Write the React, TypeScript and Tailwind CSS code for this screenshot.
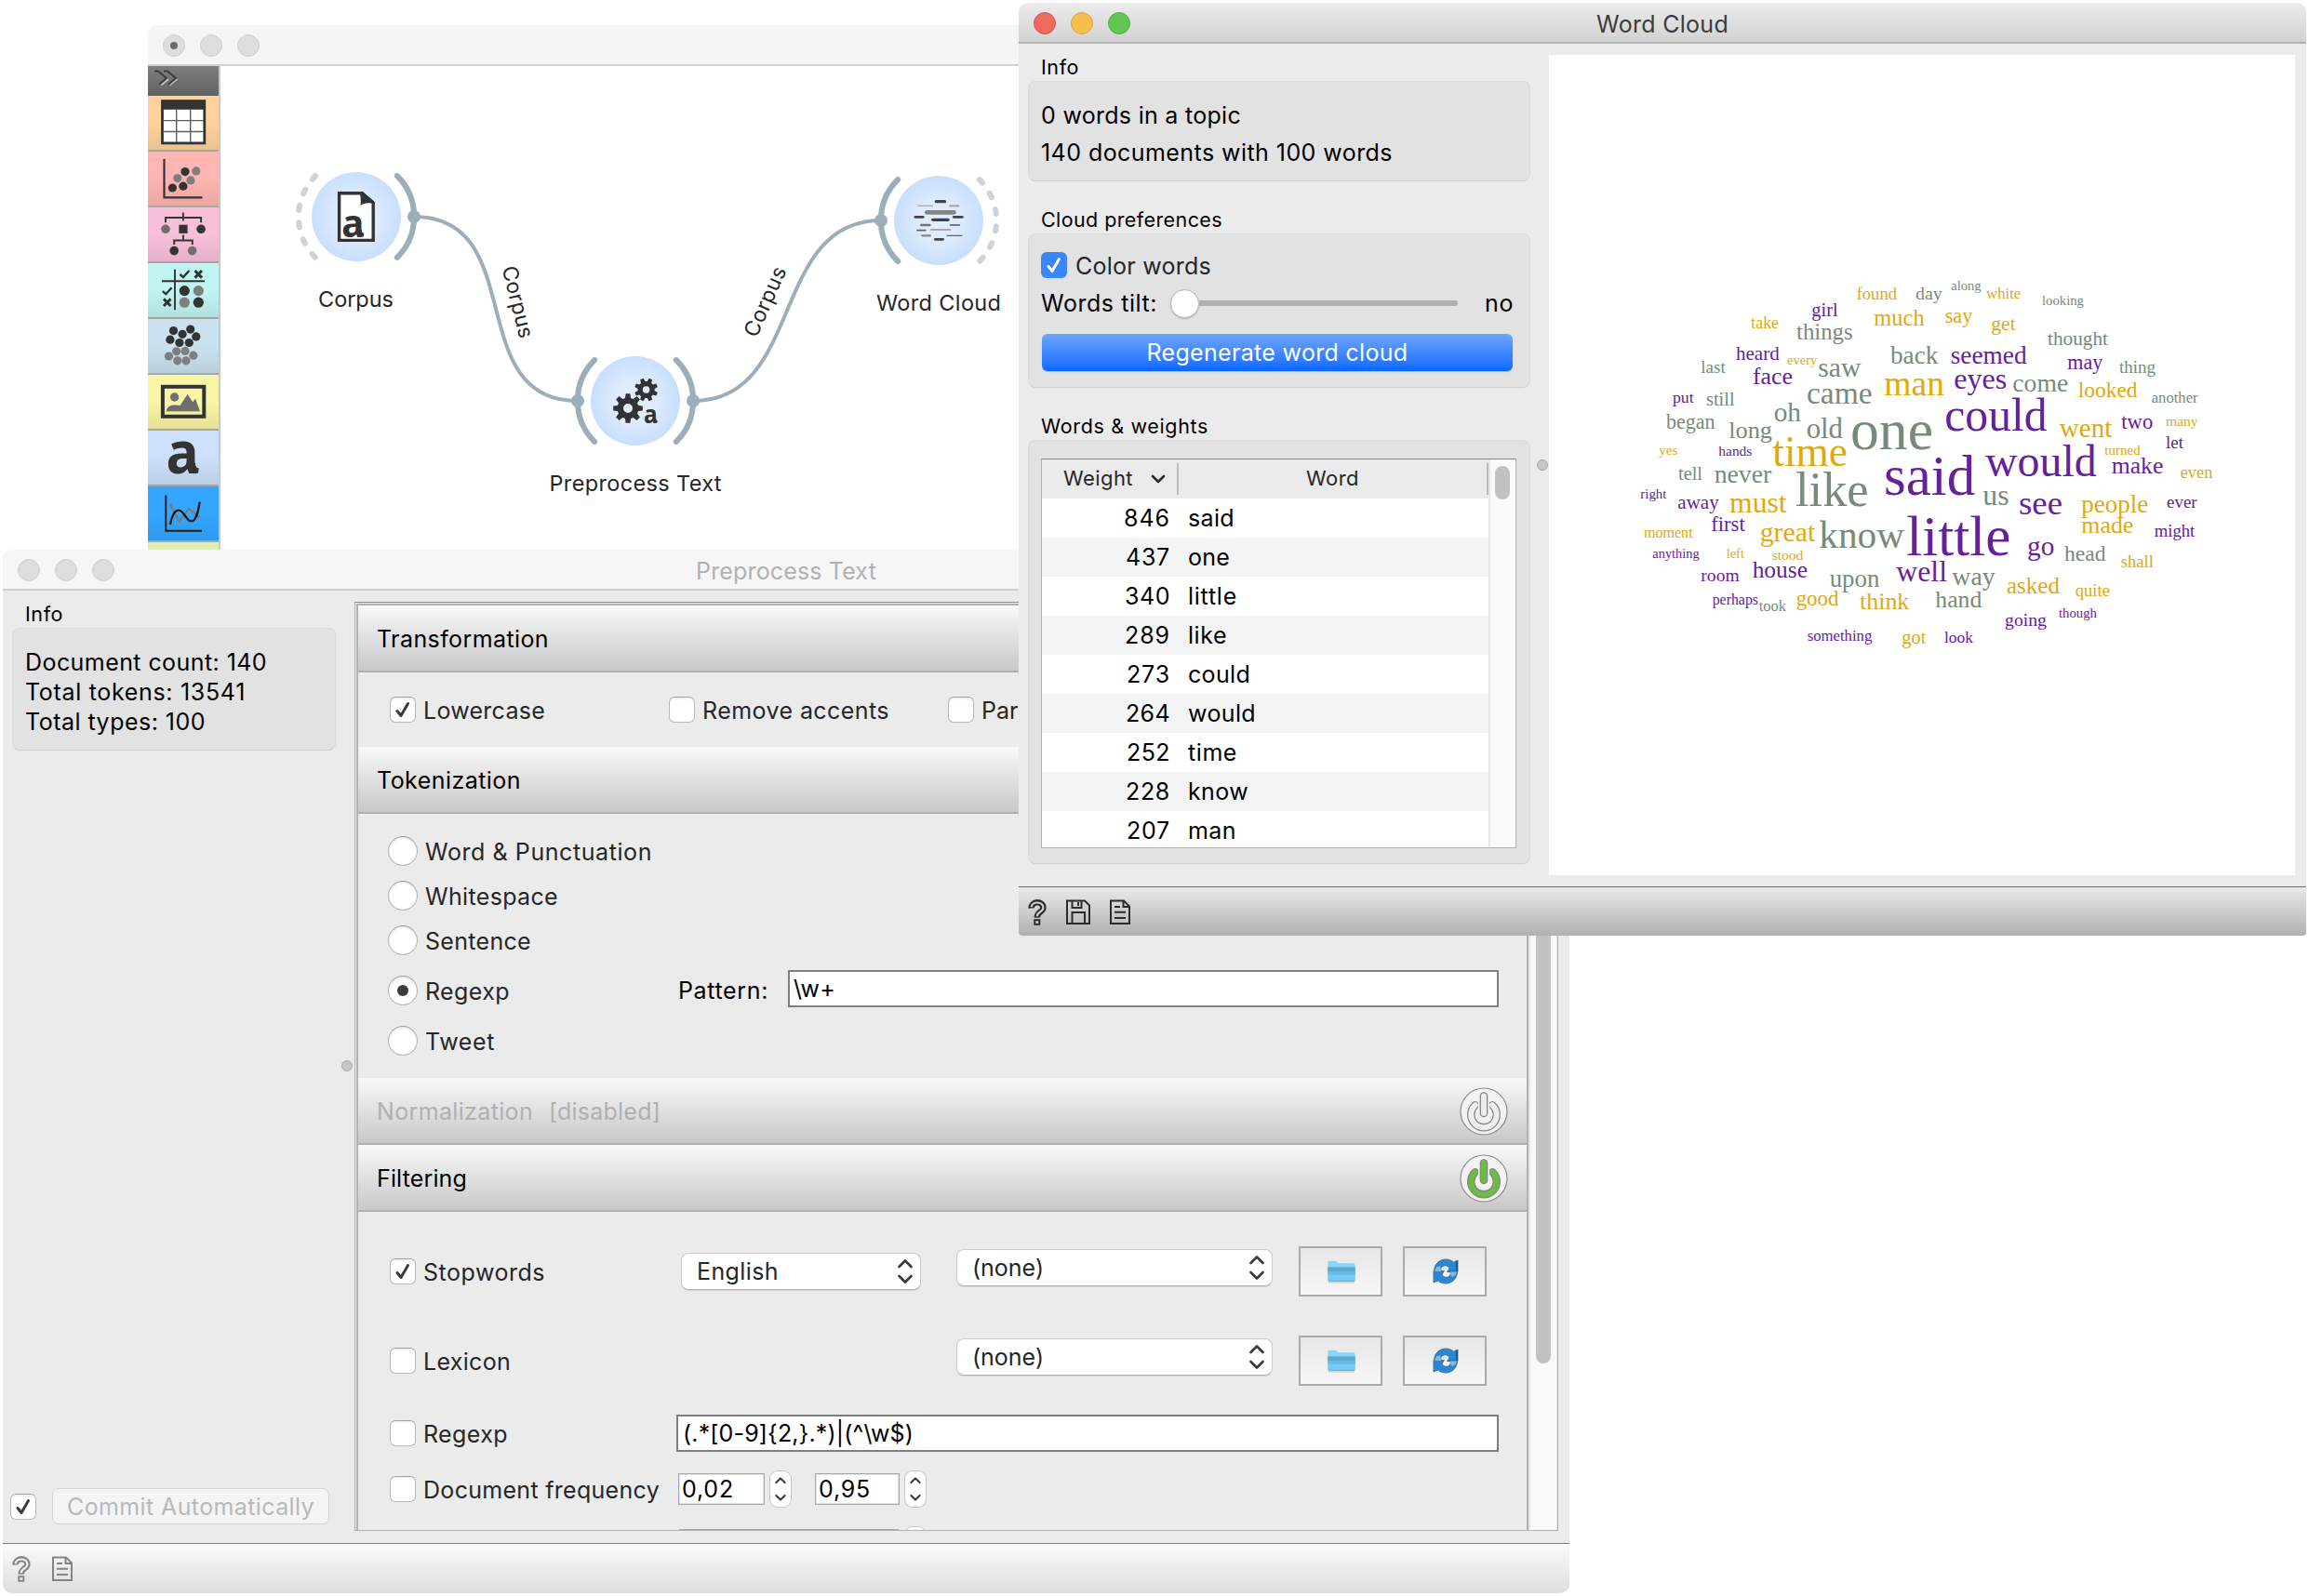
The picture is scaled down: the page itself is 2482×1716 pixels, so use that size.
import React from "react";

const measureCtx = document.createElement("canvas").getContext("2d")!;
const measure = (text: string, font: string) => {
  measureCtx.font = font;
  return measureCtx.measureText(text).width;
};

/** A single line of interface text, tracked to fill the width w. */
function T({ children, w, s = 25, className = "" }: { children: string; w?: number; s?: number; className?: string }) {
  const natural = measure(children, `400 ${s}px Inter`);
  const spacing = w ? (w + 2 - natural) / children.length : 0;
  return (
    <span className={`block shrink-0 whitespace-pre ${className}`} style={{ fontSize: s, letterSpacing: spacing }}>
      {children}
    </span>
  );
}

/* ---------- icons ---------- */

function HelpIcon({ light, dark }: { light: string; dark: string }) {
  const d = "M3.6 9.6C3 1.6 16.4 1 16.4 9C16.4 13.4 9.6 13.6 9.8 19.6";
  return (
    <svg width="20" height="28" viewBox="0 0 20 28" fill="none">
      <path d={d} stroke={dark} strokeWidth="6.4" />
      <path d="M3.6 8.2C4.2 2 16.4 1.6 16.4 9C16.4 13.4 9.6 13.6 9.8 18.2" stroke={light} strokeWidth="2.2" />
      <rect x="7.3" y="22.2" width="5" height="4.6" stroke={dark} strokeWidth="2" fill={light} />
    </svg>
  );
}

function SaveIcon({ dark }: { dark: string }) {
  return (
    <svg width="26" height="28" viewBox="0 0 26 28" fill="none" stroke={dark} strokeWidth="2">
      <path d="M1 1.5H20L25 6.5V26H1Z" />
      <path d="M6.5 1.5V9H16.5V1.5M13 3V7" />
      <path d="M6.5 26V14H20V26" />
    </svg>
  );
}

function ReportIcon({ dark }: { dark: string }) {
  return (
    <svg width="22" height="28" viewBox="0 0 22 28" fill="none" stroke={dark} strokeWidth="2">
      <path d="M1 1.5H15L21 7.5V26H1Z" />
      <path d="M14.5 1.5V8H21M5 8H11M5 13.8H17M5 20H17" />
    </svg>
  );
}

function Tick({ className }: { className: string }) {
  return (
    <svg width="20" height="20" viewBox="0 0 20 20" fill="none" strokeWidth="3" strokeLinecap="round" strokeLinejoin="round" className={className}>
      <path d="M4 11.5L8 16.5L15.5 3.5" />
    </svg>
  );
}

function Chevrons({ small }: { small?: boolean }) {
  return (
    <svg width={small ? 12 : 18} height={26} viewBox="0 0 18 26" preserveAspectRatio="none" fill="none" stroke="#3a3a3a" strokeWidth="2.6" strokeLinecap="round" strokeLinejoin="round">
      <path d={small ? "M2 6L9 1.5L16 6M2 20L9 24.5L16 20" : "M2.5 8L9 1.5L15.5 8M2.5 18L9 24.5L15.5 18"} />
    </svg>
  );
}

function PowerIcon({ on }: { on?: boolean }) {
  const fill = on ? "#6cbb45" : "#ededed";
  const arc = "M16.8 19.2A13.8 13.8 0 1 0 35.2 19.2";
  return (
    <svg width="52" height="52" viewBox="0 0 52 52" fill="none" strokeLinecap="round">
      <circle cx="26" cy="26" r="25" fill="#f2f2f2" stroke="#8c8c8c" strokeWidth="1.2" />
      <path d={arc} stroke="#868686" strokeWidth="8.4" />
      <path d={arc} stroke={fill} strokeWidth="6" />
      <path d="M26 9.5V28" stroke="#f2f2f2" strokeWidth="12" />
      <path d="M26 9.5V28" stroke="#868686" strokeWidth="8.6" />
      <path d="M26 9.5V28" stroke={fill} strokeWidth="6" />
    </svg>
  );
}

function FolderIcon() {
  return (
    <svg width="30" height="25" viewBox="0 0 30 25" className="translate-x-px">
      <path d="M0.5 2.5Q0.5 0.800 2 0.800H9L11.500 3.200H28Q29.5 3.2 29.5 5V10H0.5Z" fill="#8ad4f8" />
      <path d="M0.2 7.5H29.8V21Q29.8 22.5 28.300 22.5H1.700Q0.2 22.5 0.2 21Z" fill="#78cbf5" />
      <path d="M0.2 7.5H29.8V12H0.2Z" fill="#5babd6" />
      <path d="M0.2 12H29.8V15.500H0.2Z" fill="#69bbe5" />
      <path d="M1 22.200H29" stroke="#5aaad8" strokeWidth="1" />
      <path d="M1 23.800H29" stroke="#c9ced1" strokeWidth="1.500" />
    </svg>
  );
}

function RefreshIcon() {
  return (
    <svg width="28" height="28" viewBox="0 0 28 28" className="translate-x-px">
      <g stroke="#3c6f9a" strokeWidth="0.900" fill="#2e86d0">
        <path d="M1.500 14C1.500 6 7.500 1 14 1C17.500 1 20.500 2.200 22.500 4L27 2V14.500H15.500L18 11C17.500 8 13 6.500 10 9C8.500 10.500 8.500 12 9.500 14.500Z" />
        <path d="M26.500 14C26.500 22 20.500 27 14 27C10.500 27 7.500 25.800 5.500 24L1 26V13.500H12.500L10 17C10.500 20 15 21.500 18 19C19.500 17.500 19.500 16 18.500 13.500Z" />
      </g>
      <path d="M2.500 13C3 9.500 5 8 8.500 8.500L9 14H2.500ZM25.500 15C25 18.500 23 20 19.500 19.500L19 14.500H25.500Z" fill="#7db9ea" />
      <path d="M25.800 2.800V13.500" stroke="#1c5486" strokeWidth="1.800" />
    </svg>
  );
}

/* ---------- toolbox ---------- */

const dots = (list: number[][], fill: string, r = 4.6) =>
  list.map(([x, y]) => <circle key={`${x}-${y}`} cx={x} cy={y} r={r} fill={fill} />);

const D = "#333333";
const G = "#7f7f7f";

/** Bold lowercase "a" standing on a small foot; width and size in pixels. */
function LetterA({ x, y, size, width }: { x: number; y: number; size: number; width: number }) {
  const k = size / 61;
  const right = x + width * 0.9;
  return (
    <>
      <text x={x} y={y} fontSize={size} textLength={width} lengthAdjust="spacingAndGlyphs" fill={D} className="font-['Noto_Sans'] font-bold">
        a
      </text>
      <path d={`M${right - 7 * k} ${y - 11 * k}H${right}Q${right} ${y - 5.5 * k} ${right + 3.600 * k} ${y - 5.5 * k}L${right + 3 * k} ${y - 0.5 * k}Q${right - 5 * k} ${y + 2 * k} ${right - 7 * k} ${y - 4 * k}Z`} fill={D} />
    </>
  );
}

const categories: { bg: string; icon: React.ReactNode }[] = [
  {
    bg: "bg-[#ffd29d]",
    icon: (
      <>
        <rect x="15.5" y="5.6" width="45.3" height="45.3" fill="#fff" stroke={D} strokeWidth="2.8" />
        <rect x="15.5" y="5.6" width="45.3" height="9.2" fill={D} />
        <path d="M30.7 14V50M45.7 14V50M16 26.6H60M16 38.5H60" stroke="#5c5c5c" strokeWidth="1.4" />
      </>
    ),
  },
  {
    bg: "bg-[#ffb5b1]",
    icon: (
      <>
        <path d="M17.5 8V49.3H58.6" stroke={D} strokeWidth="2.2" />
        {dots([[31.8, 28.6], [46, 30.9], [51.8, 20.9]], G)}
        {dots([[26.4, 39], [37.9, 37.2], [40, 21.6]], D)}
      </>
    ),
  },
  {
    bg: "bg-[#f8bfdb]",
    icon: (
      <>
        <path d="M19 16.3V11H57.1V16.3M37.9 5.5V14.5M37.9 29.5V35.5M28.2 40V35.5H47.8V40" stroke={D} strokeWidth="1.9" />
        <rect x="33.4" y="18.7" width="9.2" height="9.2" fill={D} />
        {dots([[19, 23.3], [47.6, 46.6]], "#6f6f6f", 4.8)}
        {dots([[57.1, 23.3], [28.2, 46.6]], D, 4.8)}
      </>
    ),
  },
  {
    bg: "bg-[#c1f4f1]",
    icon: (
      <>
        <path d="M29 6.7V50.3M15 19.2H61" stroke={D} strokeWidth="1.9" />
        <path d="M34.5 12L38 15L44.3 8M15.8 30.2L19.3 33.2L25.6 26.2" stroke={D} strokeWidth="2.4" />
        <path d="M50.5 8L58 15.6M58 8L50.5 15.6M17 38.4L24.5 46M24.5 38.4L17 46" stroke={D} strokeWidth="3" />
        {dots([[54.3, 29.6], [39.3, 42.2]], G, 5.6)}
        {dots([[39.3, 29.6], [54.3, 42.2]], D, 5.6)}
      </>
    ),
  },
  {
    bg: "bg-[#cae1ef]",
    icon: (
      <>
        {dots([[30.7, 34.8], [40, 34.4], [22.5, 40], [48.9, 39.2], [31.8, 44.8], [41, 44.8]], G)}
        {dots([[27.5, 12.6], [45.7, 11.1], [37.1, 16.3], [51.8, 18.9], [23.9, 22.2], [33.9, 25.5], [44.3, 25.5]], D)}
      </>
    ),
  },
  {
    bg: "bg-[#f8f5a6]",
    icon: (
      <>
        <rect x="15.9" y="12.8" width="44.4" height="32" stroke={D} strokeWidth="4" />
        <circle cx="28.6" cy="24" r="4.7" fill="#707070" />
        <path d="M19.6 39.2C21 32 28 32 34.6 33L42.5 21L48.2 29.2L51 25.5L56 39.2Z" fill="#6d6d6d" />
      </>
    ),
  },
  { bg: "bg-[#cce0fb]", icon: <LetterA x={19.5} y={46} size={62} width={35} /> },
  {
    bg: "bg-[#34a6ff]",
    icon: (
      <>
        <path d="M23.9 18.5L33.6 38L43.9 24L56 33.7" stroke="#7a7a7a" strokeWidth="2.2" />
        <path d="M19.3 9.6V47.7H57.9" stroke="#1c1c1c" strokeWidth="1.9" />
        <path d="M23.9 41C26 31 29 25.5 33 25.5C39 25.5 41 37.5 46.5 37.5C52 37.5 54 27 55.7 16.6" stroke="#111" strokeWidth="2.2" />
      </>
    ),
  },
];

/* ---------- workflow canvas ---------- */

function gear(cx: number, cy: number, r: number, hole: number, turn: number) {
  const pts: string[] = [];
  for (let i = 0; i < 8; i++) {
    const a = turn + (i * Math.PI) / 4;
    for (const [da, k] of [[-0.27, 0.72], [-0.15, 1], [0.15, 1], [0.27, 0.72]]) {
      pts.push(`${(cx + Math.sin(a + da) * r * k).toFixed(2)} ${(cy - Math.cos(a + da) * r * k).toFixed(2)}`);
    }
  }
  return `M${pts.join("L")}ZM${cx - hole} ${cy}a${hole} ${hole} 0 1 0 ${hole * 2} 0a${hole} ${hole} 0 1 0 ${-hole * 2} 0Z`;
}

type Port = "dashed" | "linked";

function Node({ x, y, left, right }: { x: number; y: number; left: Port; right: Port }) {
  const arc = (side: 1 | -1, kind: Port) => (
    <>
      <path
        d={`M${x + side * 43.8} ${y - 44}A62 62 0 0 ${side === 1 ? 1 : 0} ${x + side * 43.8} ${y + 44}`}
        stroke={kind === "linked" ? "#9cafb8" : "#ccd4d9"}
        strokeWidth="6"
        strokeDasharray={kind === "dashed" ? "5 13.4" : undefined}
        strokeLinecap="round"
      />
      {kind === "linked" && <circle cx={x + side * 62} cy={y} r="7" fill="#9cafb8" />}
    </>
  );
  return (
    <>
      {arc(-1, left)}
      {arc(1, right)}
      <circle cx={x} cy={y} r="48" fill="url(#node)" />
    </>
  );
}

const bars: [number, number, number, number, string][] = [
  [1245, 1280, 200, 10, "#444"], [1193, 1240, 214, 3, "#999"], [1288, 1320, 214, 7, "#aaa"],
  [1215, 1310, 235, 14, "#858585"], [1183, 1214, 250, 8, "#444"], [1299, 1332, 250, 8, "#444"],
  [1235, 1290, 259, 10, "#404040"], [1201, 1234, 276, 7, "#777"], [1290, 1322, 276, 5, "#555"],
  [1190, 1220, 293, 5, "#666"], [1232, 1294, 291, 6, "#aaa"], [1204, 1235, 310, 7, "#888"],
  [1280, 1329, 310, 4, "#666"], [1243, 1274, 322, 8, "#444"],
];

function Canvas() {
  return (
    <svg width="858" height="520" viewBox="237 71 858 520" fill="none" className="font-[Inter]">
      <defs>
        <radialGradient id="node">
          <stop offset="0" stopColor="#e3effd" />
          <stop offset="0.5" stopColor="#dceafc" />
          <stop offset="1" stopColor="#c8dffd" />
        </radialGradient>
      </defs>
      <path d="M445 233C570 233 496 431 621 431M745 431C865 431 827 237 947 237" stroke="#9cafb8" strokeWidth="4" />
      <Node x={383} y={233} left="dashed" right="linked" />
      <Node x={683} y={431} left="linked" right="linked" />
      <Node x={1009} y={237} left="linked" right="dashed" />

      <path d="M364.6 207.8H389L401.2 218V258.4H364.6Z" fill="#fff" stroke={D} strokeWidth="3.4" />
      <path d="M388 206H390L403 217.5V219Q392 217 387.5 221Q388.5 211 386 206Z" fill={D} />
      <LetterA x={367.2} y={254.5} size={42} width={24} />

      <path d={gear(675, 439, 16, 5, 0)} fill={D} fillRule="evenodd" />
      <path d={gear(694.6, 419, 12.6, 3.8, Math.PI / 8)} fill={D} fillRule="evenodd" />
      <LetterA x={692} y={454.8} size={27} width={14.6} />

      <g transform="translate(560 150) scale(0.35714 0.33333)">
        {bars.map(([x0, x1, y, h, c]) => (
          <rect key={`${x0}-${y}`} x={x0} y={y - h / 2} width={x1 - x0} height={h} rx={h / 2} fill={c} />
        ))}
      </g>

      <g fill="#262626" fontSize="23.5">
        <text x="342" y="330" textLength="81">Corpus</text>
        <text x="590.5" y="527.5" textLength="185">Preprocess Text</text>
        <text x="942" y="333.5" textLength="134">Word Cloud</text>
      </g>
      <g fill="#262626" fontSize="22.5" textAnchor="middle">
        <text transform="translate(549 326.5) rotate(76)" textLength="79">Corpus</text>
        <text transform="translate(829.5 327.5) rotate(-66)" textLength="80">Corpus</text>
      </g>
    </svg>
  );
}

function Lights({ main }: { main?: boolean }) {
  return (
    <div className="flex gap-4">
      {[0, 1, 2].map((i) => (
        <span key={i} className="flex size-6 items-center justify-center rounded-full border border-[#cfcfcf] bg-[#dddddd]">
          {main && i === 0 && <span className="size-2 rounded-full bg-[#6b6b6b]" />}
        </span>
      ))}
    </div>
  );
}

function MainWindow() {
  return (
    <section className="absolute top-[27px] left-[159px] flex h-[564px] w-[936px] flex-col overflow-hidden rounded-tl-[10px] bg-white">
      <header className="flex h-11 items-center border-b-2 border-[#d3d3d3] bg-[#f5f5f5] pt-px pl-4">
        <Lights main />
      </header>
      <div className="flex min-h-0 flex-1">
        <nav className="w-[78px] shrink-0 overflow-hidden border-r-2 border-[#c4c9cf]">
          <div className="h-8 bg-linear-to-b from-[#7d7f7f] to-[#626464] pt-1 pl-[6px]">
            <svg width="28" height="18" viewBox="0 0 28 18" fill="none">
              <path d="M8 16.5L16 10M17 16.5L25.5 10" stroke="#c4c4c4" strokeWidth="2" />
              <path d="M1 1.5H5L14 9L6 16M11 1.5H15L24 9L16 16" stroke="#3c3c3c" strokeWidth="2" />
            </svg>
          </div>
          {categories.map((c, i) => (
            <div key={i} className={`h-[60px] border-b-2 border-[#a6a6a6] ${c.bg}`}>
              <div className="h-full bg-linear-to-b from-transparent from-50% to-black/8">
                <svg width="76" height="58" viewBox="0 0 76 58" fill="none">{c.icon}</svg>
              </div>
            </div>
          ))}
          <div className="h-[10px] bg-[#dfedb0]" />
        </nav>
        <Canvas />
      </div>
    </section>
  );
}

/* ---------- preprocess window ---------- */

function Check({ on }: { on?: boolean }) {
  return (
    <span className="flex size-7 shrink-0 items-center justify-center rounded-[6px] border border-[#b9b9b9] border-t-[#a2a2a2] bg-white shadow-[inset_0_2px_2px_#0000000f]">
      {on && <Tick className="stroke-[#3b3b3b]" />}
    </span>
  );
}

function Radio({ label, w, on }: { label: string; w: number; on?: boolean }) {
  return (
    <div className="flex w-[312px] items-center gap-2">
      <span className="flex size-8 items-center justify-center rounded-full border border-[#b4b4b4] border-t-[#9c9c9c] bg-white shadow-[inset_0_2px_3px_#00000014]">
        {on && <span className="size-3 rounded-full bg-[#3b3b3b]" />}
      </span>
      <T w={w} className="pt-[2px] text-[#262626]">{label}</T>
    </div>
  );
}

function Head({ children, off }: { children: React.ReactNode; off?: boolean }) {
  return (
    <div className={`flex h-[72px] shrink-0 items-center border-b-2 border-[#b0b0b0] bg-linear-to-b from-[#f9f9f9] to-[#c8c8c8] pt-[2px] pl-5 ${off ? "text-[#b0b0b0]" : "text-black"}`}>
      {children}
    </div>
  );
}

function Combo({ text, w, className }: { text: string; w: number; className: string }) {
  return (
    <div className={`flex h-10 shrink-0 items-center justify-between rounded-lg border border-[#cccccc] border-b-[#b0b0b0] bg-white pr-[7px] pl-4 shadow-[0_1px_1px_#00000018] ${className}`}>
      <T w={w} className="text-[#262626]">{text}</T>
      <Chevrons />
    </div>
  );
}

function Tool({ children }: { children: React.ReactNode }) {
  return (
    <span className="flex h-[54px] w-[90px] items-center justify-center border-2 border-[#ababab] bg-linear-to-b from-[#e6e6e6] to-[#f7f7f7]">
      {children}
    </span>
  );
}

function FileRow({ label, w, on, lang }: { label: string; w: number; on?: boolean; lang?: boolean }) {
  return (
    <div className="flex h-24 shrink-0 items-center pl-[34px]">
      <Check on={on} />
      <T w={w} className="ml-2 pt-px text-[#262626]">{label}</T>
      <div className="ml-auto flex items-center">
        {lang && <Combo text="English" w={86} className="mr-[38px] w-[258px]" />}
        <Combo text="(none)" w={75} className="mr-7 mb-2 w-[340px]" />
        <Tool><FolderIcon /></Tool>
        <span className="w-[22px]" />
        <Tool><RefreshIcon /></Tool>
        <span className="w-[43px]" />
      </div>
    </div>
  );
}

function Spin({ value, className }: { value: string; className: string }) {
  return (
    <>
      <span className={`flex h-[34px] items-center border border-[#a8a8a8] bg-white pl-[3px] shadow-[inset_0_0_0_1px_#e4e4e4] ${className}`}>
        <T w={54}>{value}</T>
      </span>
      <span className="ml-[5px] flex h-10 w-6 items-center justify-center rounded-[9px] border border-[#c8c8c8] bg-white">
        <Chevrons small />
      </span>
    </>
  );
}

function PreprocessWindow() {
  return (
    <section className="absolute top-[591px] left-[3px] flex h-[1122px] w-[1684px] flex-col overflow-hidden rounded-[10px] bg-[#ebebeb]">
      <header className="relative flex h-11 shrink-0 items-center border-b-2 border-[#cfcfcf] bg-[#f6f6f6] pt-[2px] pl-4">
        <Lights />
        <div className="absolute inset-0 flex items-center justify-center pt-[3px] text-[#b1b1b1]"><T w={192}>Preprocess Text</T></div>
      </header>
      <div className="flex h-[1024px] shrink-0">
        <aside className="flex w-[378px] shrink-0 flex-col pt-[10px] pl-[10px]">
          <T w={39} s={21.5} className="pl-[14px] leading-[30px]">Info</T>
          <div className="h-[132px] w-[348px] shrink-0 rounded-[8px] border border-[#dadada] border-b-[#cfcfcf] bg-[#e2e2e2] pt-5 pl-[13px] leading-8">
            <T w={258}>Document count: 140</T>
            <T w={235}>Total tokens: 13541</T>
            <T w={192}>Total types: 100</T>
          </div>
          <span className="mt-[333px] ml-[354px] size-3 rounded-full border border-[#a8a8a8] bg-[#c6c6c6]" />
          <div className="mt-auto mb-5 -ml-[2px] flex items-center">
            <Check on />
            <div className="ml-[17px] flex h-[39px] w-[298px] items-center justify-center rounded-[7px] border border-[#d3d3d3] bg-[#f4f4f4] text-[#b9b9b9]">
              <T w={264}>Commit Automatically</T>
            </div>
          </div>
        </aside>
        <div className="mt-3 flex h-[999px] w-[1294px] border border-[#b2b2b2] border-t-[#8c8c8c] pt-px pl-px">
          <div className="flex w-[1260px] shrink-0 flex-col overflow-hidden border-x-2 border-t-2 border-[#b0b0b0]">
            <Head><T w={183}>Transformation</T></Head>
            <div className="flex h-20 shrink-0 items-center gap-2 pl-[34px] text-[#262626]">
              <Check on />
              <T w={129} className="mr-[125px] pt-[2px]">Lowercase</T>
              <Check />
              <T w={199} className="mr-[55px] pt-[2px]">Remove accents</T>
              <Check />
              <T className="pt-[2px]">Parse html</T>
            </div>
            <Head><T w={153}>Tokenization</T></Head>
            <div className="flex h-[284px] shrink-0 flex-col pt-4 pl-8">
              <div className="flex h-12 items-center"><Radio label="Word & Punctuation" w={242} /></div>
              <div className="flex h-12 items-center"><Radio label="Whitespace" w={141} /></div>
              <div className="flex h-12 items-center"><Radio label="Sentence" w={112} /></div>
              <div className="flex h-[60px] items-center">
                <Radio label="Regexp" w={89} on />
                <T w={95}>Pattern:</T>
                <div className="mb-1 ml-[21px] flex h-10 w-[764px] items-center border-2 border-[#7e7e7e] bg-white pl-1"><T w={43}>{"\\w+"}</T></div>
              </div>
              <div className="flex h-12 items-center"><Radio label="Tweet" w={73} /></div>
            </div>
            <Head off>
              <T w={166} className="mr-[17px]">Normalization</T>
              <T w={118}>[disabled]</T>
              <span className="mr-5 ml-auto"><PowerIcon /></span>
            </Head>
            <Head>
              <T w={95}>Filtering</T>
              <span className="mr-5 ml-auto"><PowerIcon on /></span>
            </Head>
            <div className="flex min-h-0 flex-1 flex-col overflow-hidden pt-4">
              <FileRow label="Stopwords" w={129} on lang />
              <FileRow label="Lexicon" w={92} />
              <div className="flex h-[60px] shrink-0 items-center pl-[34px]">
                <Check />
                <T w={89} className="ml-2 pt-px text-[#262626]">Regexp</T>
                <div className="mr-[30px] ml-auto flex h-10 w-[884px] items-center border-2 border-[#7e7e7e] bg-white pl-[5px]">
                  <T w={246}>{"(.*[0-9]{2,}.*)|(^\\w$)"}</T>
                </div>
              </div>
              <div className="flex h-[60px] shrink-0 items-center pl-[34px]">
                <Check />
                <T w={252} className="ml-2 pt-px text-[#262626]">Document frequency</T>
                <Spin value="0,02" className="ml-5 w-[93px]" />
                <Spin value="0,95" className="ml-[25px] w-[91px]" />
              </div>
              <div className="flex shrink-0 items-start pt-[10px] pl-[345px]">
                <span className="mt-[3px] h-[34px] w-[236px] border-2 border-[#a8a8a8] bg-white" />
                <span className="ml-[6px] h-10 w-6 rounded-[9px] border border-[#c8c8c8] bg-white" />
              </div>
            </div>
          </div>
          <div className="w-[31px] border-r border-l-2 border-[#e6e6e6] bg-[#f9f9f9] pl-[6px]">
            <div className="h-[817px] w-4 rounded-full bg-[#c2c2c2]" />
          </div>
        </div>
      </div>
      <footer className="flex flex-1 items-center gap-[23px] border-t border-[#7f7f7f] bg-linear-to-b from-[#fafafa] to-[#dedede] pl-[10px]">
        <HelpIcon dark="#858585" light="#f0f0f0" />
        <ReportIcon dark="#858585" />
      </footer>
    </section>
  );
}

/* ---------- word cloud window ---------- */

const rows: [string, number, string, number][] = [
  ["846", 48, "said", 48], ["437", 46, "one", 43], ["340", 47, "little", 51], ["289", 47, "like", 40],
  ["273", 45, "could", 65], ["264", 46, "would", 71], ["252", 45, "time", 51], ["228", 46, "know", 63], ["207", 45, "man", 50],
];

/* word, colour, left, right, baseline; cloud units are thirds of a pixel */
type Hue = "p" | "g" | "s";
const cloud: [string, Hue, number, number, number][] = [
  ["found", "g", 767, 894, 124], ["day", "s", 957, 1040, 124], ["girl", "p", 622, 704, 178], ["much", "g", 823, 983, 208],
  ["take", "g", 427, 513, 218], ["things", "s", 573, 752, 255], ["heard", "p", 378, 515, 320], ["every", "g", 543, 637, 333],
  ["saw", "s", 643, 778, 374], ["back", "s", 876, 1027, 332], ["last", "s", 265, 341, 363], ["face", "p", 432, 558, 398],
  ["came", "s", 606, 815, 458], ["man", "g", 856, 1047, 434], ["put", "p", 174, 239, 459], ["still", "s", 282, 371, 465],
  ["oh", "s", 500, 585, 518], ["began", "s", 153, 308, 542], ["long", "s", 355, 492, 574], ["old", "s", 605, 720, 573],
  ["one", "s", 747, 1011, 608], ["yes", "g", 130, 187, 627], ["hands", "p", 322, 427, 627], ["time", "g", 496, 735, 662],
  ["said", "p", 855, 1147, 752], ["tell", "s", 192, 267, 705], ["never", "s", 308, 490, 716], ["like", "s", 570, 803, 790],
  ["right", "p", 70, 151, 766], ["away", "p", 190, 320, 800], ["must", "g", 357, 539, 812], ["first", "p", 298, 404, 873],
  ["great", "g", 455, 631, 902], ["know", "s", 646, 918, 926], ["little", "p", 928, 1261, 950], ["moment", "g", 81, 236, 892],
  ["anything", "p", 109, 257, 957], ["left", "g", 347, 402, 957], ["stood", "g", 494, 592, 962], ["room", "p", 265, 386, 1034],
  ["house", "p", 431, 606, 1022], ["upon", "s", 680, 838, 1052], ["well", "p", 895, 1056, 1034], ["perhaps", "p", 302, 447, 1108],
  ["took", "s", 452, 537, 1131], ["good", "g", 572, 706, 1112], ["think", "g", 777, 934, 1124], ["something", "p", 608, 814, 1227],
  ["got", "g", 913, 988, 1232], ["look", "p", 1050, 1140, 1232], ["along", "s", 1072, 1166, 94], ["white", "g", 1185, 1294, 123],
  ["looking", "s", 1365, 1497, 141], ["say", "g", 1052, 1138, 201], ["get", "g", 1201, 1277, 226], ["thought", "s", 1383, 1575, 273],
  ["seemed", "p", 1070, 1313, 332], ["may", "p", 1447, 1558, 350], ["thing", "s", 1614, 1728, 363], ["eyes", "p", 1081, 1249, 410],
  ["come", "s", 1270, 1447, 422], ["looked", "g", 1481, 1670, 441], ["another", "s", 1718, 1865, 459], ["could", "p", 1051, 1379, 548],
  ["went", "g", 1421, 1588, 567], ["two", "p", 1621, 1720, 542], ["many", "g", 1764, 1865, 532], ["let", "p", 1764, 1818, 603],
  ["would", "p", 1182, 1538, 692], ["turned", "g", 1567, 1679, 627], ["make", "p", 1589, 1753, 687], ["even", "g", 1811, 1912, 699],
  ["us", "s", 1174, 1256, 788], ["see", "p", 1290, 1428, 817], ["people", "g", 1492, 1705, 812], ["ever", "p", 1767, 1862, 795],
  ["made", "g", 1492, 1657, 878], ["might", "p", 1727, 1855, 891], ["go", "p", 1317, 1402, 950], ["head", "s", 1437, 1568, 968],
  ["shall", "g", 1619, 1722, 988], ["way", "s", 1075, 1211, 1046], ["asked", "g", 1251, 1419, 1070], ["quite", "g", 1472, 1581, 1083],
  ["hand", "s", 1021, 1168, 1118], ["going", "p", 1245, 1377, 1177], ["though", "p", 1419, 1539, 1150],
];
const hues: Record<Hue, string> = { p: "text-[#65219b]", g: "text-[#dea912]", s: "text-[#768b79]" };

function Cloud() {
  return (
    <div className="relative mt-3 h-[882px] w-[802px] shrink-0 bg-white font-['Liberation_Serif',serif]">
      {cloud.map(([word, hue, x0, x1, base]) => {
        const size = ((x1 - x0 + 3) / 3 / measure(word, "100px 'Liberation Serif'")) * 100;
        return (
          <span
            key={word}
            className={`absolute leading-none whitespace-pre ${hues[hue]}`}
            style={{ fontSize: size, left: 75 + x0 / 3, top: 222 + base / 3 - size * 0.8375 }}
          >
            {word}
          </span>
        );
      })}
    </div>
  );
}

function Group({ title, w, className, children }: { title: string; w: number; className: string; children: React.ReactNode }) {
  return (
    <div className="pb-[26px] pl-[10px]">
      <T w={w} s={21.5} className="pl-[14px] leading-[30px]">{title}</T>
      <div className={`w-[540px] rounded-[8px] border border-[#dadada] border-b-[#cecece] bg-[#e2e2e2] px-[13px] ${className}`}>{children}</div>
    </div>
  );
}

function WordCloudWindow() {
  return (
    <section className="absolute top-[3px] left-[1095px] flex h-[1003px] w-[1384px] flex-col overflow-hidden rounded-t-[10px] rounded-b-[4px] bg-[#ebebeb]">
      <header className="relative flex h-11 shrink-0 items-center gap-4 border-b-2 border-[#b3b3b3] bg-linear-to-b from-[#ececec] to-[#d2d2d2] pt-[2px] pl-4">
        <span className="size-6 rounded-full border border-[#d9554c] bg-[#ee6a5f]" />
        <span className="size-6 rounded-full border border-[#d9a440] bg-[#f5bf4f]" />
        <span className="size-6 rounded-full border border-[#54ad41] bg-[#62c655]" />
        <div className="absolute inset-0 flex items-center justify-center pt-[3px] text-[#3c3c3c]"><T w={140}>Word Cloud</T></div>
      </header>
      <div className="flex h-[906px] shrink-0">
        <div className="w-[556px] shrink-0 pt-[10px]">
          <Group title="Info" w={39} className="h-[108px] pt-4 leading-10">
            <T w={213}>0 words in a topic</T>
            <T w={376}>140 documents with 100 words</T>
          </Group>
          <Group title="Cloud preferences" w={193} className="h-[166px] pt-[18px]">
            <div className="flex h-[30px] items-center gap-[9px]">
              <span className="flex size-7 items-center justify-center rounded-[6px] bg-[#3a86fb]"><Tick className="stroke-white" /></span>
              <T w={144} className="pt-px text-[#262626]">Color words</T>
            </div>
            <div className="mt-[10px] flex h-8 items-center">
              <T w={123}>Words tilt:</T>
              <div className="ml-[14px] flex w-[309px] items-center">
                <span className="size-[31px] shrink-0 rounded-full border border-[#b8b8b8] bg-white shadow-[0_1px_2px_#00000030]" />
                <span className="h-[6px] flex-1 rounded-r-full bg-[#b1b1b1]" />
              </div>
              <T w={29} className="ml-auto pr-[4px]">no</T>
            </div>
            <div className="mt-[17px] ml-px flex h-10 w-[506px] items-center justify-center rounded-[6px] bg-linear-to-b from-[#6da6fc] to-[#0567ff] text-white shadow-[0_1px_1px_#00000030]">
              <T w={279}>Regenerate word cloud</T>
            </div>
          </Group>
          <Group title="Words & weights" w={178} className="h-[456px] pt-[19px]">
            <div className="flex h-[419px] w-[511px] overflow-hidden border border-[#b0b0b0] border-t-[#878787] bg-white">
              <div className="w-[480px] shrink-0">
                <div className="flex h-[42px] items-center bg-[#ebebeb] text-[#262626]">
                  <div className="flex h-[34px] w-[147px] shrink-0 items-center justify-between border-r-2 border-[#bcbcbc] pr-3 pl-[23px]">
                    <T w={73} s={22} className="-mt-[2px]">Weight</T>
                    <svg width="16" height="10" viewBox="0 0 16 10" fill="none" stroke="#2b2b2b" strokeWidth="2.6" strokeLinecap="round" strokeLinejoin="round" className="-mt-px"><path d="M2 2L8 8L14 2" /></svg>
                  </div>
                  <div className="flex h-[34px] flex-1 items-center justify-center border-r-2 border-[#bcbcbc]"><T w={55} s={22} className="-mt-[2px]">Word</T></div>
                </div>
                {rows.map(([n, nw, word, ww], i) => (
                  <div key={word} className={`flex h-[42px] items-center ${i % 2 ? "bg-[#f3f5f5]" : "bg-white"}`}>
                    <div className="flex w-[138px] justify-end"><T w={nw}>{n}</T></div>
                    <T w={ww} className="ml-[19px]">{word}</T>
                  </div>
                ))}
              </div>
              <div className="flex-1 border-l-2 border-[#e6e6e6] bg-[#fafafa] pt-[7px] pl-[5px]">
                <div className="h-9 w-4 rounded-full bg-[#c2c2c2]" />
              </div>
            </div>
          </Group>
        </div>
        <span className="mt-[447px] mr-[1px] ml-px size-3 shrink-0 rounded-full border border-[#a8a8a8] bg-[#c6c6c6]" />
        <Cloud />
      </div>
      <footer className="flex flex-1 items-center gap-[21px] border-t border-[#6e6e6e] bg-linear-to-b from-[#e9e9e9] to-[#b1b1b1] pt-[2px] pl-[10px]">
        <HelpIcon dark="#2b2b2b" light="#d2d2d2" />
        <SaveIcon dark="#2b2b2b" />
        <ReportIcon dark="#2b2b2b" />
      </footer>
    </section>
  );
}

export default function App() {
  return (
    <main className="relative h-[1716px] w-[2482px] overflow-hidden bg-white font-[Inter,'Liberation_Sans',sans-serif] leading-8 text-black">
      <MainWindow />
      <PreprocessWindow />
      <WordCloudWindow />
    </main>
  );
}
